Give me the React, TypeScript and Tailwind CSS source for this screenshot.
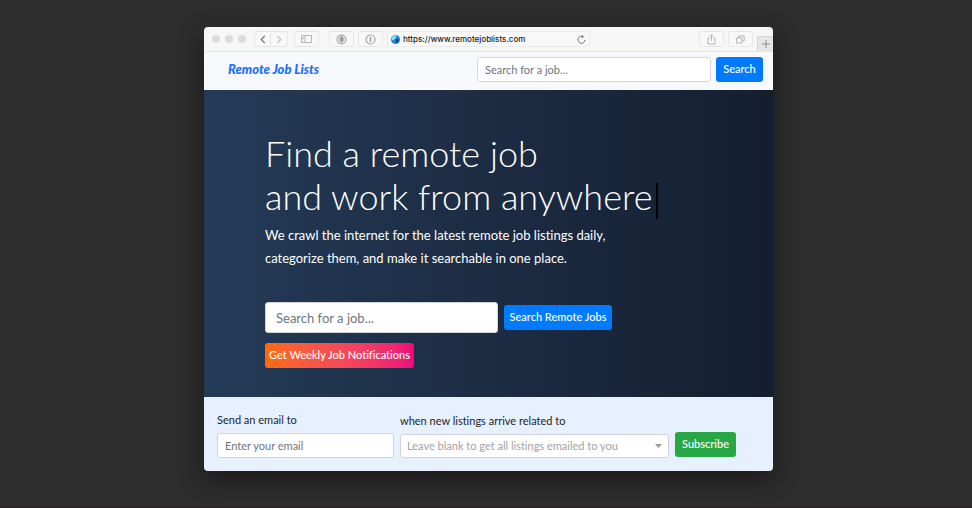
import React from "react";

const toolButton =
  "flex h-4 items-center justify-center rounded-[3px] border border-[#e6e6e6] bg-[#f8f8f8] text-[#a3a3a3]";

function BrowserBar() {
  return (
    <div className="flex h-6 items-center bg-[#f6f6f6] pl-2">
      <div className="flex gap-[5px]">
        <span className="size-2 rounded-full bg-[#dcdcdc]" />
        <span className="size-2 rounded-full bg-[#dcdcdc]" />
        <span className="size-2 rounded-full bg-[#dcdcdc]" />
      </div>
      <div className="ml-2 flex">
        <button aria-label="Back" className={`${toolButton} w-[17px] rounded-r-none`}>
          <svg width="6" height="9" viewBox="0 0 6 9" fill="none" stroke="#6f6f6f" strokeWidth="1.2">
            <path d="M4.8 .8 1.2 4.5l3.6 3.7" />
          </svg>
        </button>
        <button aria-label="Forward" className={`${toolButton} w-[17px] rounded-l-none border-l-0`}>
          <svg width="6" height="9" viewBox="0 0 6 9" fill="none" stroke="#bdbdbd" strokeWidth="1.1">
            <path d="m1.2 .8 3.6 3.7-3.6 3.7" />
          </svg>
        </button>
      </div>
      <button aria-label="Show sidebar" className={`${toolButton} ml-[6px] w-[25px]`}>
        <svg width="11" height="8" viewBox="0 0 11 8" fill="none" stroke="#b5b5b5">
          <path d="M.5.5h10v7H.5zM4 .5v7M1.5 2.5h1.5M1.5 4h1.5" />
        </svg>
      </button>
      <button aria-label="Content blocker" className={`${toolButton} ml-[10px] w-[25px]`}>
        <svg width="11" height="11" viewBox="0 0 11 11">
          <circle cx="5.5" cy="5.5" r="4.4" fill="#f2f2f2" stroke="#a8a8a8" strokeWidth="1.2" />
          <path d="M3.4 3.6h.7v-.9h.9v-.6h1v.6h.9v.8h.8v3.200L6.600 8.600H4.700L3.400 6.600z" fill="#a0a0a0" />
        </svg>
      </button>
      <button aria-label="Password manager" className={`${toolButton} ml-1 w-[25px]`}>
        <svg width="11" height="11" viewBox="0 0 11 11" fill="none">
          <circle cx="5.5" cy="5.5" r="4.5" stroke="#a6a6a6" strokeWidth="1.2" />
          <path d="M5.5 3v5" stroke="#999" strokeWidth="1.4" />
        </svg>
      </button>
      <div className="ml-1 flex h-4 w-[203px] items-center rounded-[3px] border border-[#ebebeb] bg-[#f8f8f8] pr-[3px] pl-[3px]">
        <svg width="9" height="9" viewBox="0 0 9 9" className="shrink-0">
          <circle cx="4.5" cy="4.5" r="4.5" fill="#1f86d6" />
          <path d="M.6 2.600C1.600.8 3.600.1 5.200.4L5.500 2.200 4 3.300 3 5.200 .8 5z" fill="#9ad6f7" />
          <path d="m5 4 3.200.5-.5 2.200-2 1.600-1.200-2z" fill="#0d4a96" />
        </svg>
        <span className="ml-[3px] flex-1 font-[Inter,sans-serif] text-[8px] leading-3 font-medium text-[#1c1c1c]">
          https://www.remotejoblists.com
        </span>
        <button aria-label="Reload" className="flex">
          <svg width="9" height="9" viewBox="0 0 9 9" fill="none" stroke="#666" strokeWidth=".9">
            <path d="M8 4.800A3.500 3.500 0 1 1 6 1.600M4.500.2 6.500 1.700 4.800 3.400" />
          </svg>
        </button>
      </div>
      <button aria-label="Share" className={`${toolButton} ml-auto w-[25px]`}>
        <svg width="9" height="11" viewBox="0 0 9 11" fill="none" stroke="#adadad" strokeWidth=".9">
          <path d="M3 4H1v6h7V4H6M4.500 7V1M2.700 2.600 4.500.8l1.800 1.800" />
        </svg>
      </button>
      <button aria-label="Show tabs" className={`${toolButton} ml-1 w-[25px]`}>
        <svg width="9" height="9" viewBox="0 0 9 9" fill="none" stroke="#adadad" strokeWidth=".9">
          <path d="M.5 3h5.500v5H.5zM2.700 3V1h5.500v5H6" />
        </svg>
      </button>
      <button
        aria-label="New tab"
        className="ml-1 flex h-[15px] w-4 items-center justify-center self-end border-t border-l border-[#d6d6d6] bg-[#e6e6e6]"
      >
        <svg width="8" height="8" viewBox="0 0 8 8" fill="none" stroke="#8d8d8d">
          <path d="M4 0v8M0 4h8" />
        </svg>
      </button>
    </div>
  );
}

function NavBar() {
  return (
    <nav className="flex h-[39px] items-center border-t border-[#e4e6e8] bg-[#f8f9fc] pr-[10px] pb-1 pl-6">
      <a href="#" className="text-[13px] leading-4 font-black text-[#1a6dff] italic">
        Remote Job Lists
      </a>
      <form className="ml-auto flex gap-[5px]">
        <input
          type="text"
          aria-label="Search for a job"
          placeholder="Search for a job..."
          className="h-[25px] w-[234px] rounded-[3px] border border-[#d3d9df] bg-white px-[7px] text-[11px] placeholder:text-[#6c757d]"
        />
        <button type="button" className="h-[25px] w-[47px] rounded-[3px] bg-[#007bff] text-[11px] font-medium text-white">
          Search
        </button>
      </form>
    </nav>
  );
}

function Hero() {
  return (
    <section className="bg-linear-to-r from-[#243b57] to-[#141e30] px-[61px] pt-[42px] pb-[29px] text-white">
      <h1 className="text-[36px] leading-[43px] font-light">
        Find a remote job
        <br />
        and work from anywhere
        <span className="-my-2 ml-1 inline-block h-9 w-[2px] bg-black align-middle" />
      </h1>
      <p className="mt-[6px] text-[13px] leading-[23px]">
        We crawl the internet for the latest remote job listings daily,
        <br />
        categorize them, and make it searchable in one place.
      </p>
      <form className="mt-8 flex items-center gap-[6px]">
        <input
          type="text"
          aria-label="Search for a job"
          placeholder="Search for a job..."
          className="h-[31px] w-[233px] rounded-[3px] border border-[#ced4da] bg-white px-[10px] text-[13px] text-[#495057] placeholder:text-[#6c757d]"
        />
        <button type="button" className="h-[25px] w-[108px] rounded-[3px] bg-[#007bff] text-[11px] font-medium">
          Search Remote Jobs
        </button>
      </form>
      <button className="mt-[10px] h-[25px] w-[149px] rounded-[3px] bg-linear-to-r from-[#ff6a00] to-[#ee0979] text-[11px] font-medium">
        Get Weekly Job Notifications
      </button>
    </section>
  );
}

function Subscribe() {
  return (
    <form className="flex h-[74px] items-end gap-[6px] bg-[#e6f0ff] px-[13px] pb-[13px] text-[11px] text-[#212529]">
      <div className="flex flex-col gap-[5px]">
        <label htmlFor="email" className="leading-[17px]">
          Send an email to
        </label>
        <input
          id="email"
          type="email"
          placeholder="Enter your email"
          className="h-[25px] w-[177px] rounded-[3px] border border-[#ced4da] bg-white px-[7px] placeholder:text-[#6c757d]"
        />
      </div>
      <div className="flex flex-col gap-[5px]">
        <label htmlFor="topic" className="leading-[17px]">
          when new listings arrive related to
        </label>
        <div className="relative">
          <select
            id="topic"
            className="block h-6 w-[269px] appearance-none rounded-[3px] border border-[#ced4da] bg-white px-[6px] text-[#a3a3a3]"
          >
            <option>Leave blank to get all listings emailed to you</option>
          </select>
          <svg className="pointer-events-none absolute top-[10px] right-[7px]" width="7" height="4" viewBox="0 0 7 4">
            <path d="M0 0h7L3.500 4z" fill="#999" />
          </svg>
        </div>
      </div>
      <button type="button" className="mb-[1px] h-[25px] w-[61px] rounded-[3px] bg-[#28a745] font-medium text-white">
        Subscribe
      </button>
    </form>
  );
}

export default function App() {
  return (
    <main className="flex min-h-screen justify-center border-b border-[#2a2024] bg-[#2d2d2d] pt-[27px] pb-9 pl-[5px] font-[Lato,sans-serif] [font-variant-ligatures:none]">
      <div className="w-full max-w-[569px] self-start overflow-hidden rounded-[4px] shadow-[0_8px_24px_rgba(0,0,0,0.45)]">
        <BrowserBar />
        <NavBar />
        <Hero />
        <Subscribe />
      </div>
    </main>
  );
}
